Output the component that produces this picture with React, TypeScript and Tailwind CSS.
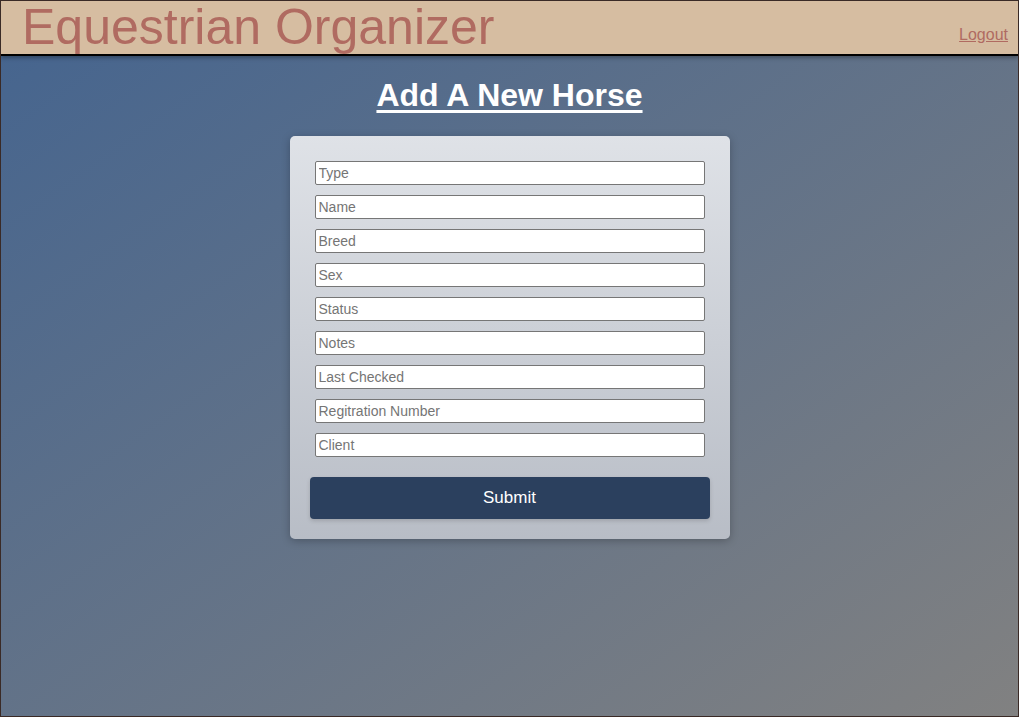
import React from "react";

const fields = [
  "Type",
  "Name",
  "Breed",
  "Sex",
  "Status",
  "Notes",
  "Last Checked",
  "Regitration Number",
  "Client",
];

export default function App() {
  return (
    <div
      className="w-[1019px] h-[717px] flex flex-col border border-[#3a2a26] bg-[linear-gradient(to_bottom_right,#44648f,#818181)] overflow-hidden"
      style={{ fontFamily: '"Liberation Sans", Arial, sans-serif' }}
    >
      <header className="h-[55px] shrink-0 bg-[#d6bda1] border-b-2 border-black flex items-start justify-between pl-[21px] pr-[10px] shadow-[0_2px_4px_rgba(0,0,0,0.3)]">
        <h1 className="text-[50px] leading-[52px] text-[#b06b61]">Equestrian Organizer</h1>
        <a href="#" className="text-[16px] text-[#b06b61] underline mt-[22px]">
          Logout
        </a>
      </header>
      <main className="flex flex-col items-center">
        <h2 className="mt-[21px] text-[32px] leading-[37px] font-bold text-white underline decoration-[3px] underline-offset-[4px]">
          Add A New Horse
        </h2>
        <form
          className="mt-[22px] w-[440px] rounded-[5px] bg-[linear-gradient(to_bottom,#dfe2e7,#b8bdc6)] shadow-[0_2px_8px_rgba(0,0,0,0.25)] pt-[25px] pb-[20px] px-[20px] flex flex-col"
          onSubmit={(e) => e.preventDefault()}
        >
          <div className="flex flex-col gap-[10px] px-[5px]">
            {fields.map((f) => (
              <input
                key={f}
                placeholder={f}
                className="h-[24px] w-[390px] bg-white border border-[#767676] rounded-[2px] px-[3px] text-[14px] text-black placeholder:text-[#757575] outline-none"
              />
            ))}
          </div>
          <button
            type="submit"
            className="mt-[20px] h-[42px] w-[400px] rounded-[4px] bg-[#2b405e] text-white text-[17px] shadow-[0_2px_4px_rgba(0,0,0,0.15)]"
          >
            Submit
          </button>
        </form>
      </main>
    </div>
  );
}
